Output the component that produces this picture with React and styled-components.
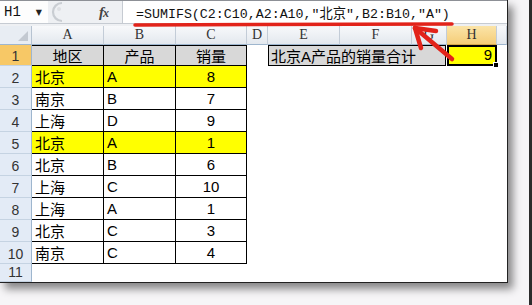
import React from "react";
import styled, { createGlobalStyle, css } from "styled-components";

const GlobalStyle = createGlobalStyle`
  html, body { margin: 0; padding: 0; background: #f6f5f7; }
  * { box-sizing: border-box; }
`;

const CJK = `"Liberation Sans", "Noto Sans CJK SC", sans-serif`;
const MONO = `"Liberation Mono", "Noto Sans CJK SC", monospace`;

const rows = [
  { n: 1, a: "地区", b: "产品", c: "销量", head: true },
  { n: 2, a: "北京", b: "A", c: "8", hl: true },
  { n: 3, a: "南京", b: "B", c: "7" },
  { n: 4, a: "上海", b: "D", c: "9" },
  { n: 5, a: "北京", b: "A", c: "1", hl: true },
  { n: 6, a: "北京", b: "B", c: "6" },
  { n: 7, a: "上海", b: "C", c: "10" },
  { n: 8, a: "上海", b: "A", c: "1" },
  { n: 9, a: "北京", b: "C", c: "3" },
  { n: 10, a: "南京", b: "C", c: "4" },
];

const cols = ["A", "B", "C", "D", "E", "F", "G", "H", ""];

export default function App() {
  return (
    <>
      <GlobalStyle />
      <Page>
        <Stage>
          <Frame>
            <TopStrip />
            <FormulaBar>
              <NameBox>
                <span>H1</span>
                <Caret>▼</Caret>
              </NameBox>
              <Knob viewBox="0 0 16 22">
                <path d="M14 2 A9 9 0 0 0 14 20" fill="none" stroke="#c9cdd2" strokeWidth="2.2" />
                <circle cx="11" cy="8" r="2" fill="#dde0e4" />
              </Knob>
              <FxLabel>
                <i>f</i>
                <Sub>x</Sub>
              </FxLabel>
              <FormulaInput>=SUMIFS(C2:C10,A2:A10,"北京",B2:B10,"A")</FormulaInput>
            </FormulaBar>
            <Gap />
            <Sheet>
              <Corner>
                <svg width="10" height="10" viewBox="0 0 10 10">
                  <path d="M10 0 L10 10 L0 10 Z" fill="#c3c9d1" />
                </svg>
              </Corner>
              {cols.map((c, i) => (
                <ColHead key={i} $sel={c === "H"}>
                  {c}
                </ColHead>
              ))}
              {rows.map((r) => (
                <React.Fragment key={r.n}>
                  <RowHead $sel={r.n === 1}>{r.n}</RowHead>
                  <Cell $table $top={r.head} $bg={r.head ? "#d8d8d8" : r.hl ? "#ffff00" : "#fff"} $align={r.head ? "center" : "left"}>
                    {r.a}
                  </Cell>
                  <Cell $table $top={r.head} $bg={r.head ? "#d8d8d8" : r.hl ? "#ffff00" : "#fff"} $align={r.head ? "center" : "left"}>
                    {r.b}
                  </Cell>
                  <Cell $table $top={r.head} $bg={r.head ? "#d8d8d8" : r.hl ? "#ffff00" : "#fff"} $align="center">
                    {r.c}
                  </Cell>
                  <Cell />
                  {r.n === 1 ? (
                    <>
                      <Merged>北京A产品的销量合计</Merged>
                      <Active>
                        9
                        <Handle />
                      </Active>
                      <Cell />
                    </>
                  ) : (
                    <>
                      <Cell />
                      <Cell />
                      <Cell />
                      <Cell />
                      <Cell />
                    </>
                  )}
                </React.Fragment>
              ))}
              <RowHead>11</RowHead>
              <EmptyRow />
            </Sheet>
            <Marks viewBox="0 0 508 283">
              <line x1="135" y1="25" x2="452" y2="24" stroke="#e2231a" strokeWidth="3.5" strokeLinecap="round" />
              <g stroke="#e2231a" strokeWidth="4.5" strokeLinecap="round" fill="none">
                <line x1="452" y1="59" x2="415" y2="28" />
                <line x1="415" y1="28" x2="436" y2="31" />
                <line x1="415" y1="28" x2="421" y2="48" />
              </g>
            </Marks>
          </Frame>
        </Stage>
        <RightEdge />
      </Page>
    </>
  );
}

const Page = styled.div`
  width: 532px;
  height: 305px;
  display: flex;
  background: #f6f5f7;
`;

const Stage = styled.div`
  flex: 1;
`;

const RightEdge = styled.div`
  width: 3px;
  margin-right: 0;
  background: #2b2b2b;
`;

const Frame = styled.div`
  position: relative;
  width: 508px;
  height: 283px;
  display: flex;
  flex-direction: column;
  background: #fff;
  border-right: 1px solid #222;
  border-bottom: 1px solid #222;
  box-shadow: 5px 6px 8px rgba(0, 0, 0, 0.45);
  overflow: hidden;
`;

const TopStrip = styled.div`
  height: 2px;
  background: #8d9096;
`;

const FormulaBar = styled.div`
  height: 23px;
  display: flex;
  align-items: center;
  background: #eef0f3;
  border-bottom: 1px solid #c6cbd2;
`;

const NameBox = styled.div`
  width: 48px;
  height: 100%;
  display: flex;
  align-items: center;
  justify-content: space-between;
  padding: 0 6px 0 4px;
  background: #fdfdfd;
  font-family: ${MONO};
  font-size: 14px;
  color: #111;
`;

const Caret = styled.span`
  font-family: "DejaVu Sans", sans-serif;
  font-size: 8px;
  color: #222;
`;

const Knob = styled.svg`
  width: 16px;
  height: 22px;
`;

const FxLabel = styled.div`
  margin-left: auto;
  width: 23px;
  font-family: "Liberation Serif", serif;
  font-size: 15px;
  font-weight: bold;
  color: #444;
  letter-spacing: -1px;
`;

const Sub = styled.span`
  font-style: italic;
  font-size: 12px;
`;

const FormulaInput = styled.div`
  width: 385px;
  height: 100%;
  display: flex;
  align-items: center;
  padding-left: 13px;
  background: #fff;
  border-left: 1px solid #c6cbd2;
  font-family: ${MONO};
  font-size: 13.3px;
  color: #111;
  white-space: nowrap;
`;

const Gap = styled.div`
  height: 3px;
  background: #eef0f3;
`;

const Sheet = styled.div`
  flex: 1;
  display: grid;
  grid-template-columns: 32px 72px 72px 71px 21px 72px 72px 35px 50px 1fr;
  grid-template-rows: 19px 21px repeat(9, 22px) 1fr;
`;

const Corner = styled.div`
  display: flex;
  align-items: flex-end;
  justify-content: flex-end;
  padding: 0 3px 3px 0;
  background: #e8edf3;
  border-right: 1px solid #b7c3d1;
  border-bottom: 1px solid #9eb6ce;
`;

const ColHead = styled.div`
  display: flex;
  align-items: center;
  justify-content: center;
  font-family: "Liberation Serif", serif;
  font-size: 14px;
  color: #333;
  background: linear-gradient(#f8f9fb, #e3e8ee);
  border-right: 1px solid #c3ccd7;
  border-bottom: 1px solid #9eb6ce;
  ${({ $sel }) =>
    $sel &&
    css`
      background: linear-gradient(#fbe4a8, #f5cd78);
      border-bottom-color: #d8a94a;
    `}
`;

const RowHead = styled.div`
  display: flex;
  align-items: flex-end;
  justify-content: center;
  padding-bottom: 1px;
  font-family: "Liberation Sans", sans-serif;
  font-size: 14px;
  color: #333;
  background: ${({ $sel }) => ($sel ? "#f7c866" : "#e3ebf6")};
  border-right: 1px solid #9eb6ce;
  border-bottom: 1px solid #c5d3e2;
`;

const Cell = styled.div`
  display: flex;
  align-items: center;
  justify-content: ${({ $align }) => ($align === "center" ? "center" : "flex-start")};
  padding-left: ${({ $align }) => ($align === "center" ? "0" : "3px")};
  font-family: ${CJK};
  font-size: 15px;
  color: #000;
  background: ${({ $bg }) => $bg || "#fff"};
  ${({ $table }) =>
    $table &&
    css`
      border-right: 1px solid #000;
      border-bottom: 1px solid #000;
    `}
  ${({ $top }) =>
    $top &&
    css`
      border-top: 1px solid #000;
    `}
`;

const Merged = styled.div`
  grid-column: span 3;
  display: flex;
  align-items: center;
  padding-left: 2px;
  font-family: ${CJK};
  font-size: 15px;
  color: #000;
  background: #d8d8d8;
  border: 1px solid #000;
  margin-right: 1px;
`;

const Active = styled.div`
  position: relative;
  display: flex;
  align-items: flex-end;
  justify-content: flex-end;
  padding: 0 3px 1px 0;
  font-family: "Liberation Sans", sans-serif;
  font-size: 15px;
  color: #000;
  background: #ffff00;
  border: 2px solid #000;
`;

const Handle = styled.span`
  position: absolute;
  right: -4px;
  bottom: -4px;
  width: 6px;
  height: 6px;
  background: #000;
  border: 1px solid #fff;
`;

const EmptyRow = styled.div`
  grid-column: span 9;
  background: #fff;
`;

const Marks = styled.svg`
  position: absolute;
  left: 0;
  top: 0;
  width: 508px;
  height: 283px;
  pointer-events: none;
`;
